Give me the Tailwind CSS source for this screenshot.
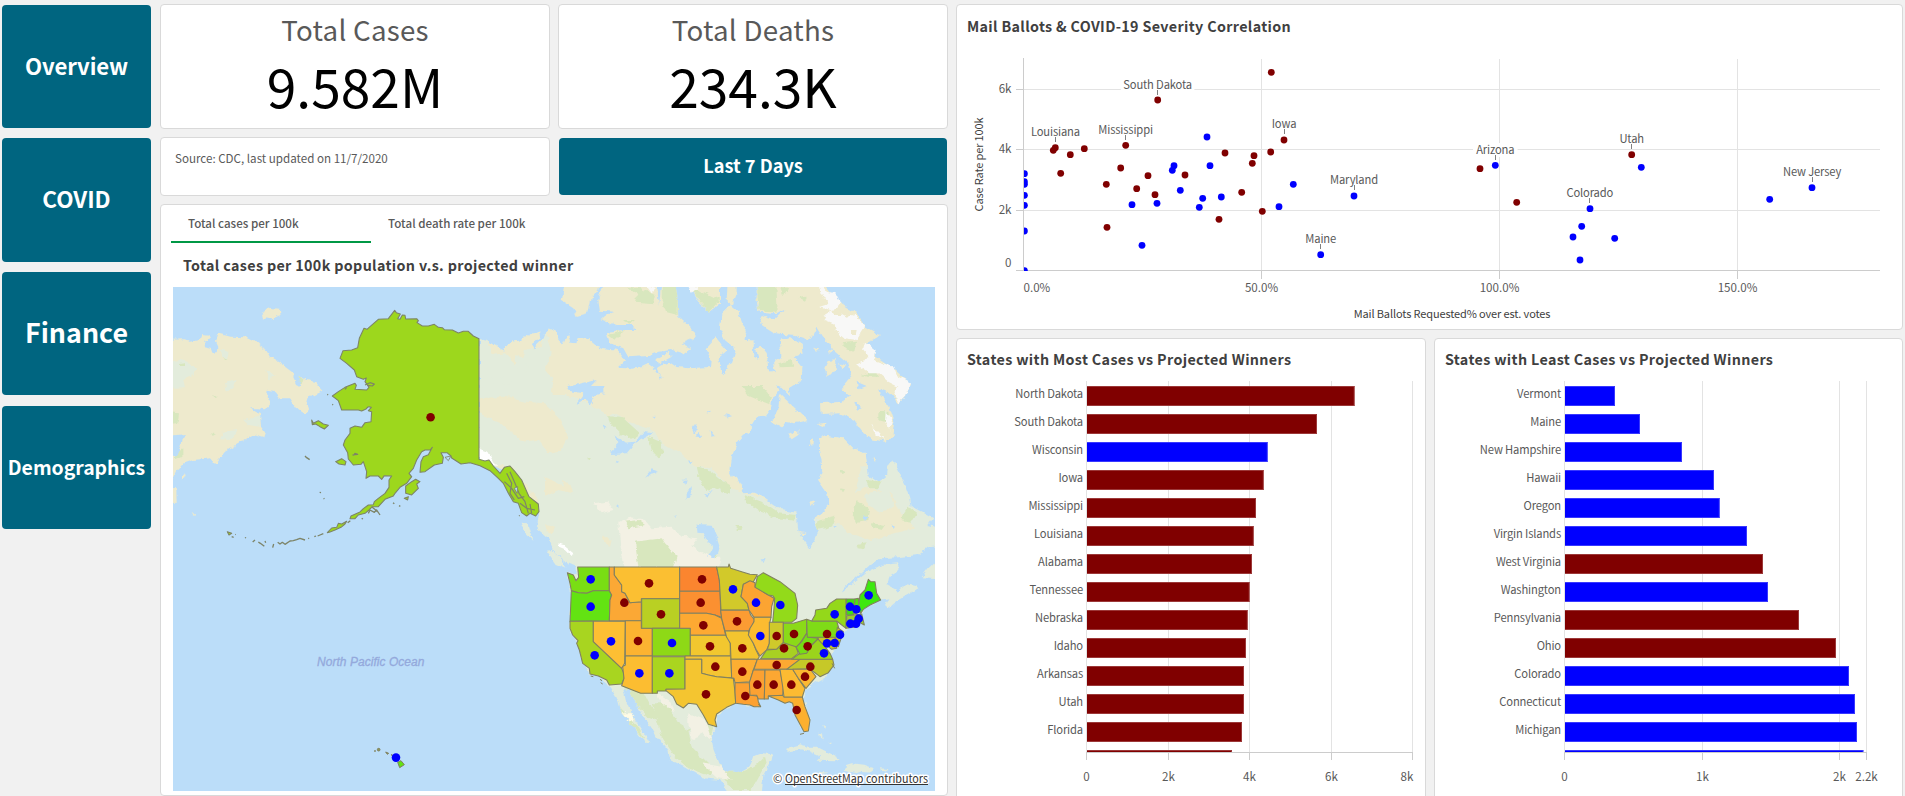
<!DOCTYPE html>
<html lang="en">
<head>
<meta charset="utf-8">
<title>COVID-19 and Mail Ballots</title>
<script src="https://cdn.jsdelivr.net/npm/@tailwindcss/browser@4"></script>
</head>
<body class="h-[796px] w-[1905px] overflow-hidden bg-[#f1f1f1] font-['Noto_Sans_CJK_SC','Open_Sans',sans-serif] text-[#404040]">
<div class="flex h-[796px] w-[1905px] overflow-hidden">

  <nav class="ml-[2px] flex w-[149px] shrink-0 flex-col gap-[10px] pt-[5px] font-bold text-white">
    <a class="flex h-[123px] items-center justify-center rounded bg-[#006580] pb-px text-[22.2px] tracking-[-0.15px]">Overview</a>
    <a class="flex h-[124px] items-center justify-center rounded bg-[#006580] pb-[2px] text-[22.5px]">COVID</a>
    <a class="flex h-[123px] items-center justify-center rounded bg-[#006580] pb-[2px] text-[26.8px]">Finance</a>
    <a class="mt-px flex h-[123px] items-center justify-center rounded bg-[#006580] pb-[2px] text-[19.4px]">Demographics</a>
  </nav>

  <main class="ml-[9px] flex w-[788px] shrink-0 flex-col gap-2 pt-1">
    <div class="grid grid-cols-[390px_390px] gap-2">
      <section class="flex h-[125px] flex-col items-center rounded border border-[#d9d9d9] bg-white">
        <h2 class="mt-[4px] text-[27.7px] font-normal leading-[40px] tracking-[0.25px] text-[#595959]">Total Cases</h2>
        <p class="mt-[6px] text-[53.3px] leading-[60px] text-black">9.582M</p>
      </section>
      <section class="flex h-[125px] flex-col items-center rounded border border-[#d9d9d9] bg-white">
        <h2 class="mt-[4px] text-[27.7px] font-normal leading-[40px] tracking-[0.25px] text-[#595959]">Total Deaths</h2>
        <p class="mt-[6px] text-[53.3px] leading-[60px] text-black">234.3K</p>
      </section>
      <section class="h-[59px] rounded border border-[#d9d9d9] bg-white pl-[14px] pt-[10px] text-[11.6px] leading-5 text-[#595959]">Source: CDC, last updated on 11/7/2020</section>
      <div class="h-[59px] p-px"><button class="flex h-[57px] w-full items-center justify-center rounded bg-[#006580] pb-[2px] text-[18.2px] font-bold text-white">Last 7 Days</button></div>
    </div>

    <section class="flex h-[600px] flex-col rounded border border-[#d9d9d9] bg-white">
      <div class="ml-[10px] flex h-[38px] text-[11.6px] font-medium leading-5 text-[#595959]">
        <div class="w-[200px] border-b-2 border-[#009845] pl-[17px] pt-[8px]">Total cases per 100k</div>
        <div class="w-[200px] pl-[17px] pt-[8px] tracking-[0.03px]">Total death rate per 100k</div>
      </div>
      <h2 class="ml-[22px] mt-[11px] h-[33px] text-[14.3px] font-bold leading-[22px] tracking-[0.35px]">Total cases per 100k population v.s. projected winner</h2>
      <svg class="ml-[12px] block h-[504px] w-[762px] shrink-0" viewBox="173 287 762 504">
        <defs>
          <path id="mainland" d="M-198 176L-175 182L-150 195L-122 213L-118 192L-100 185L-75 182L-50 165L-15 155L-12 170L-40 192L-32 205L-5 178L0 165L12 142L32 152L40 180L55 195L68 160L75 188L95 190L98 172L130 178L150 195L175 205L215 210L240 240L218 262L255 268L290 262L310 252L335 272L350 295L338 262L375 248L395 262L430 265L500 262L520 250L530 278L540 285L548 255L562 250L570 215L565 200L540 180L525 150L530 100L555 75L580 95L590 130L605 150L598 180L625 182L628 235L640 240L635 205L650 200L665 220L670 270L690 280L685 250L710 230L705 180L735 172L770 195L772 222L745 230L772 260L770 300L730 325L735 345L710 320L690 315L700 330L680 360L678 385L660 410L635 412L620 435L620 450L595 465L575 490L560 530L555 580L560 595L575 590L590 620L595 640L625 638L660 655L710 690L755 698L760 755L780 785L795 805L812 780L818 755L803 715L830 700L850 675L848 640L820 600L832 570L830 540L822 510L825 475L845 468L895 475L930 510L962 520L968 585L1000 605L1025 590L1030 560L1045 540L1060 570L1080 610L1095 650L1100 680L1130 695L1165 715L1150 735L1190 745L1190 798L1150 802L1120 825L1060 832L1005 835L975 855L900 920L885 940L960 880L1010 855L1060 850L1060 870L1030 890L1025 915L1060 935L1085 910L1110 915L1120 925L1055 965L1030 985L1020 975L1030 955L1005 960L955 985L945 1020L955 1030L915 1045L890 1055L880 1075L875 1100L855 1130L860 1160L845 1190L785 1225L775 1260L795 1320L785 1355L765 1335L740 1265L690 1250L650 1250L640 1280L600 1275L570 1270L540 1290L515 1310L515 1340L500 1370L505 1410L520 1450L545 1475L590 1475L615 1460L625 1430L650 1420L683 1422L680 1440L655 1485L650 1545L555 1545L525 1500L475 1495L415 1460L375 1440L370 1410L330 1360L285 1290L250 1230L235 1225L242 1260L260 1300L285 1340L310 1380L313 1392L285 1370L255 1330L230 1300L215 1250L193 1215L160 1188L135 1182L110 1135L105 1100L77 1055L75 1020L80 950L67 878L95 885L95 861L60 845L30 820L10 775L-25 745L-18 700L-48 650L-90 590L-120 570L-150 560L-198 545Z"/>
          <clipPath id="land"><use href="#mainland"/></clipPath>
          <filter id="rough" x="-5%" y="-5%" width="110%" height="110%">
            <feTurbulence type="fractalNoise" baseFrequency=".05" numOctaves="3" seed="4"/>
            <feDisplacementMap in="SourceGraphic" scale="16" xChannelSelector="R" yChannelSelector="G"/>
          </filter>
        </defs>
        <rect x="173" y="287" width="762" height="504" fill="#bbddf9"/>

        <!-- Siberia -->
        <g transform="translate(165 280) scale(.33333)" filter="url(#rough)">
          <path fill="#eeeacd" d="M0 180L60 178L75 186L110 178L115 165L130 167L135 178L118 182L120 202L138 207L142 218L158 217L160 200L150 180L158 160L200 170L240 172L275 188L305 210L315 228L350 250L390 280L388 295L400 320L410 310L403 290L425 300L450 305L475 332L430 355L425 375L432 395L420 404L400 390L375 355L345 355L328 335L308 332L305 350L315 370L300 388L280 385L255 385L285 403L288 440L302 460L298 472L265 463L230 485L180 515L150 552L135 535L85 540L60 548L35 575L24 600L0 610ZM288 102L315 86L345 90L347 104L320 118L290 115ZM45 590L60 580L55 592L45 598ZM0 622L34 625L35 672L0 670ZM80 695L90 704L88 712Z"/>
          <path fill="#e3ecdc" d="M0 250L60 240L90 262L85 285L55 300L60 322L0 325ZM165 205L190 212L190 235L172 230ZM180 310L215 300L205 325L185 335ZM235 420L285 410L285 440L250 435ZM175 455L215 450L195 480L165 478ZM300 270L330 285L310 300Z"/>
          <path fill="#d8e7be" d="M0 395L42 400L38 430L0 432ZM30 520L55 505L55 530L30 540ZM400 290L415 298L408 312ZM45 252L60 250L60 258L45 258ZM175 232L190 235L180 240ZM145 345L155 350L148 355ZM135 460L150 462L140 468Z"/>
          <path fill="#bbddf9" d="M0 470L60 462L50 478L45 510L35 530L0 520Z"/>
        </g>

        <g transform="translate(545 280) scale(.33333)" filter="url(#rough)">
          <use href="#mainland" fill="#e3ecdc"/>
          <g clip-path="url(#land)">
            <path fill="#eeeacd" d="M-210 150L-170 180L-160 225L-120 220L-80 260L-60 210L-10 200L0 150L20 220L0 270L25 300L20 345L60 345L130 370L190 410L205 400L250 425L320 450L350 490L400 515L450 560L500 565L555 620L595 640L650 655L755 700L800 712L890 735L910 760L980 780L1050 760L1110 745L1090 720L1060 690L1040 640L960 620L930 640L950 560L1060 540L1190 745L1190 100L560 30L-210 120Z"/>
            <path fill="#eeeacd" d="M-198 355L-120 350L-60 365L0 370L40 410L70 470L50 510L10 520L-20 480L-70 485L-130 430L-198 400ZM0 590L60 620L80 640L40 630L0 650ZM-150 555L-100 560L-55 620L-20 660L-20 700L-60 640ZM50 600L75 610L85 640L60 625ZM0 730L30 740L20 765L5 755ZM170 765L200 780L195 800L175 785Z"/>
            <path fill="#e3ecdc" d="M-190 270L-150 300L-160 330L-198 320ZM960 640L1030 630L1050 680L1000 700L965 670ZM-90 225L-60 235L-50 280L-85 265ZM-130 290L-100 300L-120 325Z"/>
            <path fill="#d8e7be" d="M590 318L650 318L678 350L672 372L635 358L605 345ZM190 408L235 415L285 460L260 476L225 460L200 435ZM310 470L345 485L355 520L340 535L320 510ZM455 560L500 575L530 600L555 615L555 645L510 625L480 630L465 600ZM595 645L650 665L700 700L755 705L750 722L700 715L640 690L600 662ZM810 725L870 710L860 740L815 750ZM935 660L975 690L970 720L935 725L925 700ZM1090 680L1115 700L1100 725L1065 720ZM965 600L1010 605L1000 625L975 625ZM575 738L592 738L590 750L575 750ZM700 250L740 240L745 260L705 262ZM125 532L138 532L135 540L125 538ZM885 570L900 572L895 582L885 580ZM885 625L900 628L895 636ZM980 730L1020 735L1010 750L985 745ZM935 795L965 790L955 808L938 805Z"/>
            <path fill="#f3f1e4" d="M145 670L190 665L205 690L170 700ZM220 730L260 712L300 720L320 745L380 740L410 770L460 775L440 800L500 830L530 830L520 870L240 870L225 790Z"/>
            <path fill="#d8e7be" d="M240 725L280 720L300 735L250 745ZM270 785L350 775L380 815L395 830L385 862L280 862ZM495 820L520 825L515 835Z"/>
            <path fill="#fff" d="M-198 505L-170 515L-152 548L-140 558L-198 545Z"/>
            <path fill="#d8e7be" d="M320 1270L365 1270L400 1330L430 1350L440 1400L470 1430L500 1460L500 1490L430 1465L390 1430L350 1370ZM480 1330L505 1340L495 1380L470 1340ZM520 1470L600 1475L640 1450L660 1430L665 1450L620 1530L560 1530ZM195 1240L230 1290L280 1340L300 1380L270 1350L220 1300ZM230 1215L300 1240L340 1320L310 1310L260 1260Z"/>
            <path fill="#f3f1e4" d="M330 1235L380 1270L390 1300L350 1270ZM430 1300L480 1320L500 1380L470 1360L440 1380L430 1330ZM470 1450L530 1460L560 1500L520 1495Z"/>
            <path fill="#fffbe6" d="M225 1300L270 1300L265 1320L245 1325Z"/>
            <path fill="#fff" d="M40 790L55 795L65 803L85 820L80 828L60 808L42 800Z"/>
          </g>
          <path fill="#e3ecdc" d="M5 812L20 810L50 840L62 866L35 855ZM1190 825L1150 865L1130 892L1190 895ZM-70 728L-52 730L-45 755L-35 782L-58 760Z"/>

          <!-- Arctic islands -->
          <path fill="#eeeacd" d="M60 0L165 0L160 30L140 55L130 98L95 108L85 85L50 62ZM175 0L335 0L342 75L350 0L390 0L398 60L400 110L450 155L452 170L435 180L410 190L438 205L425 222L380 210L340 215L310 228L250 232L235 205L195 190L185 160L235 150L272 150L265 135L215 135L170 118L180 108L208 95L165 92L160 60ZM425 0L525 0L525 70L492 95L465 70ZM548 0L575 0L575 40L562 75L545 62ZM635 0L695 0L710 60L720 85L695 100L640 95L635 60ZM700 0L825 0L885 70L935 100L960 140L1005 165L985 180L960 190L985 215L990 230L1050 270L1095 310L1080 350L1060 372L1035 340L1000 325L1005 345L1030 370L1050 430L1045 470L1020 485L980 478L950 455L925 420L885 400L830 402L828 370L890 365L915 350L890 325L920 290L910 250L870 215L830 165L815 140L795 180L750 165L690 160L650 135L645 115L660 108L690 118L718 90L700 60ZM512 172L545 212L520 235L528 260L495 262L498 230L482 205ZM705 342L740 375L788 420L750 430L720 425L710 442L680 425L700 385ZM848 243L873 241L876 275L845 285L838 265ZM330 240L375 215L380 230L345 250ZM730 465L760 450L760 465L740 478ZM792 480L805 475L802 497L793 493ZM820 432L845 428L838 440ZM882 250L905 258L890 265ZM808 200L822 205L815 215ZM848 207L868 210L852 218ZM795 665L817 660L800 678ZM760 755L785 760L770 765ZM982 535L990 537L986 545Z"/>
          <path fill="#d8e7be" d="M350 0L390 0L398 60L398 105L360 95L350 60ZM245 20L285 25L330 45L325 70L270 65L280 45ZM440 25L475 35L525 60L492 95L465 65ZM635 0L690 0L695 95L640 90ZM190 165L240 150L210 180ZM230 120L270 120L255 132ZM890 190L930 185L925 215L900 205ZM950 285L995 270L1000 290L965 290ZM1000 400L1030 395L1035 430L1000 420ZM705 20L730 25L715 45ZM760 55L785 50L780 65Z"/>
          <path fill="#f8f8f7" d="M820 0L845 35L875 40L885 70L870 90L905 110L930 105L960 140L935 180L900 175L870 150L865 130L840 120L835 105L860 90L820 82L850 72L830 40ZM960 185L992 210L985 240L1045 260L1055 285L1095 305L1080 350L1060 370L1045 340L1060 320L1030 305L1000 280L970 280L935 255L955 245L970 225L955 205ZM1022 395L1050 430L1030 440L1040 460L1020 425ZM978 432L1020 480L995 465ZM425 10L460 22L440 38ZM300 12L335 25L320 40Z"/>
          <path fill="#eeeacd" d="M862 92L885 90L888 108L868 108ZM912 92L930 95L925 110L908 105ZM918 150L935 150L932 165L918 165Z"/>
          <path fill="#bbddf9" d="M935 305L965 318L940 328ZM928 365L952 380L935 390ZM64 322L110 310L155 300L138 318L178 318L178 340L150 345L130 378L122 355L92 372L115 340L70 332ZM195 515L220 490L208 463L240 488L270 485L295 455L325 460L270 490L245 520L200 522ZM455 735L500 737L515 770L525 800L520 820L510 835L490 830L505 800L485 785L475 760L458 758ZM300 590L320 568L342 575L315 582ZM425 640L440 618L440 635L425 660ZM440 440L455 432L450 460L440 455ZM497 450L512 468L500 470ZM535 402L562 408L550 412ZM485 395L497 392L495 398ZM170 432L185 440L178 444ZM322 407L335 408L330 413ZM412 600L422 598L418 612ZM480 645L500 632L490 650ZM650 835L662 835L655 850ZM955 705L970 708L960 725ZM350 290L338 290L345 297ZM460 455L470 470L455 470ZM385 705L395 702L390 712ZM215 675L222 680L215 682ZM130 360L142 350L140 370ZM430 540L440 545L432 550ZM210 542L220 545L212 550ZM865 735L875 735L870 742ZM1040 735L1050 740L1042 744Z"/>
        </g>

        <g id="states" transform="translate(550 550) scale(.33333)" stroke="#808060" stroke-width="3.2" stroke-linejoin="round"></g>
        <g transform="translate(550 550) scale(.33333)">
          <path fill="#e3ecdc" filter="url(#rough)" d="M705 600L730 588L750 583L775 590L800 590L840 610L872 628L860 634L800 632L812 620L780 605L755 598L710 605ZM888 645L905 640L945 645L972 655L965 668L930 665L915 672L885 665ZM808 665L835 668L815 672ZM992 655L1015 657L1010 665L992 662ZM820 525L828 528L826 540ZM808 548L815 550L818 565L810 560ZM835 575L845 578L842 585Z"/>
          <path fill="none" stroke="#808060" stroke-width="3" d="M750 553L762 550M122 378L130 380M150 388L156 392M152 398L158 402M846 340L854 355M625 462L632 470"/>
        </g>

        <!-- Alaska and the Aleutians -->
        <g transform="translate(165 280) scale(.33333)" fill="#9dd71d" stroke="#7d8468" stroke-width="3.2" stroke-linejoin="round">
          <path d="M689 91L694 98L706 102L698 116L705 118L712 105L720 106L722 117L755 116L760 122L756 128L772 138L790 138L808 133L820 142L832 143L838 149L862 150L880 159L895 154L910 154L925 168L942 176L942 538L960 543L972 540L985 558L1005 580L1018 562L1035 558L1050 575L1070 600L1092 650L1120 672L1122 695L1112 708L1095 700L1085 708L1070 698L1060 670L1045 665L1030 640L1015 610L1000 595L975 572L945 557L915 548L888 552L860 534L858 528L846 518L828 518L835 532L832 550L808 555L780 575L765 577L768 545L775 530L790 524L802 502L795 510L780 510L770 515L755 540L745 565L732 580L740 590L725 610L705 622L690 640L685 648L660 658L640 680L622 680L612 690L600 700L580 705L570 716L555 716L558 708L585 696L595 686L610 675L625 674L628 665L640 655L660 640L672 622L672 600L680 588L658 587L650 598L640 588L615 588L603 595L605 575L595 545L588 553L565 555L550 537L548 518L535 495L540 480L555 460L555 445L570 438L590 442L600 428L618 425L620 395L610 392L619 382L610 380L603 387L590 393L580 390L530 390L520 362L502 348L520 335L540 322L570 310L574 316L570 328L605 330L612 322L600 305L604 294L595 298L575 290L568 270L545 250L525 235L534 212L560 210L578 203L583 175L597 145L606 148L615 140L640 118L670 116Z"/>
          <path d="M440 420L445 430L460 422L475 432L490 436L478 447L465 440L452 432L442 434ZM512 545L530 536L543 545L540 555L522 552ZM722 618L740 605L752 598L765 605L755 612L760 625L740 645L722 640ZM718 655L730 650L728 660ZM487 758L500 744L515 742L520 730L530 732L545 724L540 732L528 742L510 750L495 756ZM187 755L200 760L192 765Z"/>
          <path fill="none" stroke-width="4" d="M420 528L425 533L434 539M464 637L468 638M476 655L478 657M487 343L489 345M502 373L504 375M702 677L706 679M684 668L688 671M548 728L556 722M200 770L206 772M211 763L212 764M241 772L242 775M263 786L270 780M280 786L286 790L298 799M300 783L302 788M323 803L326 792M338 787L345 792L352 787L360 793L375 783L385 782L395 779L405 775L420 780M430 774L432 776M448 770L453 768M458 768L465 765L475 761M590 715L594 717M610 700L615 690L628 697L635 690L645 705M620 680L640 697"/>
          <path fill="none" stroke-width="3.5" d="M1025 580L1040 610L1035 640L1048 660M1035 575L1050 610L1062 640L1080 665L1090 700M1018 605L1040 625L1060 655L1078 650M1065 670L1085 685L1110 690M1095 672L1100 700M1062 706L1064 708M600 315L615 308L628 312L622 318L608 316M562 525L578 523L570 520L565 527M540 328L545 322"/>
          <path fill="#bbddf9" stroke-width="2.5" d="M840 532L858 528L850 542ZM1048 625L1058 620L1056 640Z"/>
        </g>

        <!-- Hawaii -->
        <g transform="translate(165 550) scale(.33333)" fill="#8a9a58" stroke="#808060" stroke-width="3">
          <circle cx="641" cy="599" r="4"/><circle cx="630" cy="603" r="1.5"/><path d="M662 606L671 610L667 613ZM678 614L684 617Z"/>
          <path fill="#63e312" d="M698 637L708 632L718 644L704 653Z"/>
        </g>
        <g id="pins"></g>
        <text x="317" y="665.5" textLength="107.5" font-family="Liberation Sans" font-style="italic" font-size="12" fill="#94a9dc" stroke="#94a9dc" stroke-width=".3">North Pacific Ocean</text>
        <g font-size="11.2" fill="#333">
          <text x="773" y="783" stroke="#fff" stroke-width="3" stroke-linejoin="round" paint-order="stroke">©</text>
          <text x="785" y="783" stroke="#fff" stroke-width="3" stroke-linejoin="round" paint-order="stroke" textLength="143" lengthAdjust="spacingAndGlyphs">OpenStreetMap contributors</text>
          <path d="M785 784.5H928" stroke="#333"/>
        </g>
      </svg>
    </section>
  </main>

  <aside class="ml-2 flex w-[947px] shrink-0 flex-col gap-2 pt-1">
    <section class="h-[326px] rounded border border-[#d9d9d9] bg-white">
      <h2 class="ml-[10px] mt-[11px] h-[30px] text-[14.3px] font-bold leading-5 tracking-[0.34px]">Mail Ballots &amp; COVID-19 Severity Correlation</h2>
      <svg id="scatter" class="block h-[283px] w-[945px]" viewBox="957 46 945 283" font-size="11.6" fill="#595959"></svg>
    </section>
    <div class="flex gap-2">
      <section class="h-[470px] w-[470px] rounded border border-[#d9d9d9] bg-white">
        <h2 class="ml-[10px] mt-[10px] h-[31px] text-[14.3px] font-bold leading-5 tracking-[0.35px]">States with Most Cases vs Projected Winners</h2>
        <svg id="most" class="block h-[420px] w-[468px]" viewBox="957 380 468 420" font-size="11.6" fill="#595959"></svg>
      </section>
      <section class="h-[470px] w-[469px] rounded border border-[#d9d9d9] bg-white">
        <h2 class="ml-[10px] mt-[10px] h-[31px] text-[14.3px] font-bold leading-5 tracking-[0.35px]">States with Least Cases vs Projected Winners</h2>
        <svg id="least" class="block h-[420px] w-[467px]" viewBox="1435 380 467 420" font-size="11.6" fill="#595959"></svg>
      </section>
    </div>
  </aside>
</div>

<script>
const RED = '#800000', BLUE = '#0000ff';
const put = (id, html) => { document.getElementById(id).innerHTML = html; };

// State outlines: [fill, polygon points]
const states = [
['#79de14','52,68 70,75 78,92 86,82 83,51 178,51 178,122 130,122 110,130 85,128 64,122 60,100'],
['#63e312','64,122 85,128 110,130 130,122 178,122 185,135 180,150 178,212 60,214 62,170'],
['#a8d520','60,214 130,214 130,275 215,355 222,372 222,385 215,402 178,405 170,390 145,378 120,372 118,355 98,340 88,300 80,280 84,272 68,255 60,235'],
['#fdbf33','130,214 226,214 224,340 215,355 130,275'],
['#fba835','178,51 193,51 193,75 215,105 215,125 225,130 240,158 270,155 274,158 274,212 178,212 180,150 185,135 178,122'],
['#fbbf32','193,51 389,51 389,146 274,146 274,155 240,158 225,130 215,125 215,105 193,75'],
['#fcb331','226,212 274,212 274,235 307,235 307,318 226,318'],
['#b9d023','275,146 389,146 389,235 275,235'],
['#fcbd31','226,318 307,318 307,430 272,430 215,407 222,385 218,350 226,345'],
['#8ed916','307,235 421,235 421,318 307,318'],
['#aad51f','307,320 405,320 405,417 348,418 348,423 322,423 322,430 307,430'],
['#fb852f','389,51 500,51 508,90 510,124 389,124'],
['#fb9031','389,124 510,124 512,180 515,202 495,195 470,190 389,190'],
['#fda932','389,190 470,190 495,195 515,205 527,256 421,256 421,235 389,235'],
['#f2c72f','421,256 527,256 535,265 541,280 541,318 421,318'],
['#f5c432','405,318 543,318 545,383 500,380 475,375 455,370 455,328 405,328'],
['#f4c530','405,328 455,328 455,370 475,375 500,380 550,385 555,425 557,460 530,472 500,492 495,510 500,530 475,523 460,495 440,463 415,460 400,474 380,462 370,440 348,422 348,418 405,417'],
['#d2c92a','500,51 535,51 537,42 542,55 575,65 600,73 622,74 610,95 580,103 573,140 592,160 597,180 513,180 510,124 508,90'],
['#fb9c33','512,181 597,181 602,195 614,210 605,230 595,243 525,243 515,205'],
['#f3c52f','525,243 595,243 600,260 610,280 618,300 628,320 622,330 615,328 543,328 541,280 530,262'],
['#fdae32','543,328 622,328 610,360 600,395 555,398 552,385 545,383'],
['#fda131','555,398 600,398 603,420 600,436 622,438 625,455 632,470 612,470 600,465 580,463 557,460 555,425'],
['#fca432','580,103 600,92 615,98 615,110 655,135 672,145 665,170 663,202 612,202 597,180 592,160 573,140'],
['#fbbb31','612,202 663,202 660,215 658,280 650,300 630,318 618,298 610,280 595,255 600,235 612,215'],
['#93da1a','640,68 690,95 735,130 743,165 740,205 725,217 668,217 672,175 674,145 668,137 655,135 615,112 622,80'],
['#cfc92b','658,217 700,217 700,278 680,298 652,298 658,280'],
['#8bda18','700,220 730,220 770,208 770,250 750,280 738,292 715,285 700,278'],
['#a8d022','632,326 650,300 680,298 700,278 738,290 745,310 725,326'],
['#fca932','622,328 750,328 710,358 612,358'],
['#fba132','610,360 645,360 643,447 625,447 620,436 600,436 598,398'],
['#fca732','645,360 690,360 700,410 698,436 655,438 655,447 643,447'],
['#fcb02f','655,438 698,436 702,441 757,441 765,470 780,510 775,543 762,545 735,495 728,460 718,455 705,460 685,450'],
['#fcbb32','690,358 728,358 745,385 765,415 757,441 702,441 698,410'],
['#c6c828','710,358 750,328 848,328 852,345 835,368 810,380 780,357 728,358'],
['#fbb832','728,358 780,357 798,380 768,415 745,385'],
['#9bd41c','725,328 750,310 770,308 785,285 805,266 825,290 840,310 848,328'],
['#c6c828','775,262 855,262 860,295 845,298 835,290 820,285 805,268'],
['#75dd15','770,250 775,262 805,265 785,285 770,310 750,313 738,292 755,275'],
['#7fdb17','770,208 785,213 860,213 868,240 860,262 772,262'],
['#94d81a','785,213 795,195 797,180 830,175 840,160 860,147 888,147 888,235 860,213'],
['#c6c828','862,232 880,245 865,290 852,288 858,262'],
['#40e010','889,147 915,147 910,195 890,195'],
['#50e010','915,147 925,145 930,185 910,193'],
['#9dcc30','890,197 935,192 943,225 925,215 890,218'],
['#a8d022','888,218 925,215 912,232 888,235'],
['#3ee80f','925,172 930,135 945,120 955,88 962,95 975,95 980,130 992,150 960,165 940,178 932,190']];
put('states', states.map(([f, p]) => `<polygon fill="${f}" points="${p}"/>`).join(''));

// Projected winner pins, in page units
const pin = (x, y, c) => `<circle cx="${x}" cy="${y}" r="4.3" fill="${c}"/>`;
const us = (x, y, c) => pin(550 + x / 3, 550 + y / 3, c);
const bluePins = [[122,88],[122,170],[134,316],[183,274],[366,279],[268,370],[358,370],[549,118],[618,158],[691,165],[631,258],[854,193],[900,170],[919,178],[926,206],[901,221],[918,221],[956,136],[870,254],[831,280],[854,279],[822,310]];
const redPins = [[297,100],[223,158],[333,193],[264,273],[456,88],[452,158],[460,226],[480,289],[496,350],[468,433],[561,214],[577,295],[577,365],[586,438],[680,258],[732,252],[702,295],[773,289],[831,252],[680,345],[622,404],[671,404],[724,404],[781,350],[765,380],[740,480]];
put('pins', redPins.map(p => us(...p, RED)).join('') + bluePins.map(p => us(...p, BLUE)).join('') + pin(430.6, 417.3, RED) + pin(396, 757.6, BLUE));

// Scatter plot
const L = (x1, y1, x2, y2, c) => `<path d="M${x1} ${y1}L${x2} ${y2}" stroke="${c}" stroke-width="1" fill="none"/>`;
let s = '';
[89.5, 149.5, 210.5].forEach(y => s += L(1024, y, 1880, y, '#e3e3e3') + L(1016, y, 1024, y, '#ccc'));
[1261.5, 1499.5, 1737.5].forEach(x => s += L(x, 59, x, 270, '#e3e3e3') + L(x, 270, x, 279, '#ccc'));
s += L(1016, 270.5, 1880, 270.5, '#ccc') + L(1023.5, 58, 1023.5, 271, '#ccc');
[['6k',93],['4k',153],['2k',214],['0',267]].forEach(([t, y]) => s += `<text x="1011.5" y="${y}" text-anchor="end">${t}</text>`);
s += `<text x="1023.5" y="292">0.0%</text>`;
[['50.0%',1261.5],['100.0%',1499.5],['150.0%',1737.5]].forEach(([t, x]) => s += `<text x="${x}" y="292" text-anchor="middle">${t}</text>`);
s += `<text x="1452" y="318" text-anchor="middle" fill="#404040" font-size="11" letter-spacing="-.13">Mail Ballots Requested% over est. votes</text>`;
s += `<text transform="translate(983 164.5) rotate(-90)" text-anchor="middle" fill="#404040" font-size="11" letter-spacing="-.15">Case Rate per 100k</text>`;
[['Louisiana',1055.4,136],['Mississippi',1125.6,134],['South Dakota',1157.6,89],['Iowa',1284,128],['Maryland',1354,184],['Maine',1320.7,243],['Arizona',1495.3,154],['Utah',1631.7,143],['Colorado',1589.8,197],['New Jersey',1812,176]]
  .forEach(([t, x, y]) => { const w = t.length * 5.8 + 4;
    if (t === 'South Dakota' || t === 'Arizona') s += `<rect x="${x - w / 2}" y="${y - 11}" width="${w}" height="14" fill="#fff"/>`;
    s += `<text x="${x}" y="${y}" text-anchor="middle" font-size="11.2" letter-spacing="-.15">${t}</text>` + L(Math.floor(x) + .5, y + 1, Math.floor(x) + .5, y + 6, '#808080'); });
const dot = (x, y, c) => `<circle cx="${x.toFixed(1)}" cy="${y.toFixed(1)}" r="3.4" fill="${c}"/>`;
const a = (x, y, c) => dot(950 + x / 3, y / 3, c), b = (x, y, c) => dot(1400 + x / 3, y / 3, c);
[[964,217],[623,300],[1002,420],[316,443],[310,451],[361,464],[403,446],[527,436],[332,520],[512,504],[469,553],[594,527],[560,566],[615,584],[705,525],[471,682],[825,459],[912,467],[907,490],[962,456],[875,577],[937,634],[807,658]].forEach(p => s += a(...p, RED));
[[771,411],[672,497],[667,511],[780,497],[691,571],[758,595],[748,622],[814,591],[621,610],[546,614],[576,736],[1030,553],[987,620],[1212,588],[1112,764]].forEach(p => s += a(...p, BLUE));
[[240,506],[695,464],[350,607]].forEach(p => s += b(...p, RED));
[[286,496],[724,502],[1236,563],[1109,598],[570,626],[545,679],[519,711],[644,715],[540,780]].forEach(p => s += b(...p, BLUE));
s += '<clipPath id="plot"><rect x="1024" y="50" width="860" height="221"/></clipPath><g clip-path="url(#plot)">';
[521,545,553,586,616,693,812].forEach(y => s += dot(1024.4, y / 3, BLUE));
put('scatter', s + '</g>');

// Horizontal bar charts
function bars(id, x0, grid, rows) {
  let h = '';
  grid.forEach(([x]) => h += L(x, 381, x, 752, '#e3e3e3') + L(x, 752, x, 760, '#ccc'));
  h += `<clipPath id="${id}c"><rect x="${x0}" y="380" width="400" height="372"/></clipPath>`;
  rows.forEach(([t, end, c], i) => {
    const y = 386 + i * 28;
    h += `<g clip-path="url(#${id}c)"><rect x="${x0}" y="${y}" width="${end - x0}" height="20" fill="${c}"/><path d="M${x0} ${y + .5}H${end - .5}V${y + 19.5}H${x0}" fill="none" stroke="#fff" stroke-opacity=".22"/></g>`;
    if (t) h += `<text x="${x0 - 4}" y="${y + 12.3}" text-anchor="end" font-size="11.2" letter-spacing="-.15">${t}</text>`;
  });
  h += L(grid[0][0], 752.5, grid[grid.length - 1][0] + .5, 752.5, '#ccc');
  grid.forEach(([x, t, dx]) => h += `<text x="${x + (dx || 0)}" y="781" text-anchor="middle">${t}</text>`);
  put(id, h);
}
bars('most', 1087, [[1086.5,'0'],[1168.5,'2k'],[1249.5,'4k'],[1331.5,'6k'],[1412.5,'8k',-5.5]], [
['North Dakota',1354.7,RED],['South Dakota',1317,RED],['Wisconsin',1267.8,BLUE],['Iowa',1263.8,RED],['Mississippi',1256,RED],['Louisiana',1253.8,RED],['Alabama',1252,RED],['Tennessee',1249.7,RED],['Nebraska',1247.8,RED],['Idaho',1246,RED],['Arkansas',1244,RED],['Utah',1244,RED],['Florida',1242,RED],['',1232,RED]]);
bars('least', 1565, [[1564.5,'0'],[1702.5,'1k'],[1839.5,'2k'],[1866.5,'2.2k']], [
['Vermont',1615,BLUE],['Maine',1640,BLUE],['New Hampshire',1682,BLUE],['Hawaii',1714,BLUE],['Oregon',1719.8,BLUE],['Virgin Islands',1747,BLUE],['West Virginia',1763,RED],['Washington',1768,BLUE],['Pennsylvania',1799,RED],['Ohio',1836,RED],['Colorado',1849,BLUE],['Connecticut',1855,BLUE],['Michigan',1857,BLUE],['',1863.5,BLUE]]);
</script>
</body>
</html>
